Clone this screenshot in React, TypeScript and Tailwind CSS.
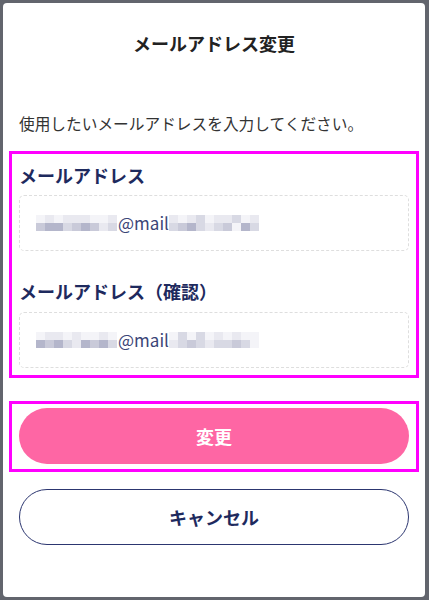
import React from "react";

const font = { fontFamily: '"Noto Sans CJK JP", "Noto Sans", sans-serif' };

function Blur({ cells }: { cells: string[][] }) {
  return (
    <span className="inline-flex flex-col align-middle">
      {cells.map((row, i) => (
        <span key={i} className="flex">
          {row.map((c, j) => (
            <span key={j} className="block h-[8px] w-[9px]" style={{ background: c }} />
          ))}
        </span>
      ))}
    </span>
  );
}

const a = "#c9cad9";
const b = "#b4b6cb";
const c = "#e9e9f0";
const d = "#f4f4f8";
const e = "#d8d9e4";

export default function App() {
  return (
    <div className="w-[429px] h-[600px] bg-[#62656d] pt-[3px] pl-[3px] pr-[4px] pb-[3px]" style={font}>
      <div className="h-full bg-white rounded-[4px] flex flex-col">
        <div className="h-[80px] flex items-center justify-center text-[18px] font-bold text-[#222]">
          メールアドレス変更
        </div>
        <div className="mt-[29px] px-[16px] leading-[24px] text-[15.7px] text-[#333]">
          使用したいメールアドレスを入力してください。
        </div>
        <div className="mt-[15px] mx-[6px] border-[3px] border-[#ff00ff] px-[7px] pt-[9px] pb-[7px]">
          <div className="leading-[24px] text-[18px] font-bold text-[#1e2a5e]">メールアドレス</div>
          <div className="mt-[8px] h-[56px] rounded-[5px] border border-dashed border-[#dedede] flex items-center pl-[16px] text-[17px] text-[#3b4577]">
            <Blur cells={[[d, c, d, c, c, c, d, d, c], [a, b, b, e, a, b, a, c, e]]} />
            <span className="ml-[1px]">@mail</span>
            <Blur cells={[[c, d, c, e, d, c, c, e, d, c], [e, a, b, e, c, e, a, d, b, e]]} />
          </div>
          <div className="mt-[28px] leading-[24px] text-[18px] font-bold text-[#1e2a5e]">メールアドレス（確認）</div>
          <div className="mt-[9px] h-[56px] rounded-[5px] border border-dashed border-[#dedede] flex items-center pl-[16px] text-[17px] text-[#3b4577]">
            <Blur cells={[[d, c, c, d, c, d, d, c, d], [b, a, b, e, c, b, a, b, e]]} />
            <span className="ml-[1px]">@mail</span>
            <Blur cells={[[d, e, d, e, d, c, d, c, d, d], [c, e, a, e, c, e, e, a, e, d]]} />
          </div>
        </div>
        <div className="mt-[23px] mx-[6px] border-[3px] border-[#ff00ff] px-[7px] pt-[4px] pb-[5px]">
          <button className="w-full h-[56px] rounded-full bg-[#fe66a4] text-white font-bold text-[18px] flex items-center justify-center">
            変更
          </button>
        </div>
        <div className="mt-[17px] px-[16px]">
          <button className="w-full h-[56px] rounded-full border border-[#2c3670] bg-white text-[#1e2a5e] font-bold text-[18px] flex items-center justify-center">
            キャンセル
          </button>
        </div>
      </div>
    </div>
  );
}
